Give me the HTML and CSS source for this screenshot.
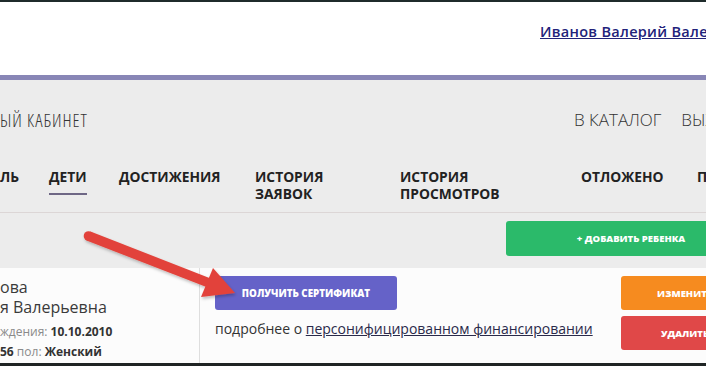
FILE: index.html
```html
<!DOCTYPE html>
<html lang="ru">
<head>
<meta charset="utf-8">
<title>Личный кабинет</title>
<link rel="stylesheet" href="styles.css">
</head>
<body>
<div class="page">
  <div class="topline"></div>
  <header class="header">
    <a class="user" href="#">Иванов Валерий Валер</a>
  </header>
  <div class="accent"></div>
  <section class="grey">
    <div class="titlebar">
      <h1 class="title">ЫЙ КАБИНЕТ</h1>
      <nav class="topnav">
        <a href="#">В КАТАЛОГ</a>
        <a href="#">ВЫХ</a>
      </nav>
    </div>
    <nav class="tabs">
      <a class="tab" href="#">ЛЬ</a>
      <a class="tab active" href="#">ДЕТИ</a>
      <a class="tab" href="#">ДОСТИЖЕНИЯ</a>
      <a class="tab" href="#">ИСТОРИЯ<br>ЗАЯВОК</a>
      <a class="tab" href="#">ИСТОРИЯ<br>ПРОСМОТРОВ</a>
      <a class="tab" href="#">ОТЛОЖЕНО</a>
      <a class="tab" href="#">П</a>
    </nav>
    <div class="actions">
      <button class="btn btn-green">+ ДОБАВИТЬ РЕБЕНКА</button>
    </div>
  </section>
  <section class="card">
    <div class="info">
      <div class="name">ова<br>я Валерьевна</div>
      <div class="detail"><span class="label">ждения:</span> <b>10.10.2010</b></div>
      <div class="detail"><b>56</b> <span class="label">пол:</span> <b>Женский</b></div>
    </div>
    <div class="main">
      <button class="btn btn-purple">ПОЛУЧИТЬ СЕРТИФИКАТ</button>
      <p class="more">подробнее о <a href="#">персонифицированном финансировании</a></p>
    </div>
    <div class="side">
      <button class="btn btn-orange">ИЗМЕНИТЬ</button>
      <button class="btn btn-red">УДАЛИТЬ</button>
    </div>
  </section>
  <svg class="arrow" width="706" height="366" viewBox="0 0 706 366" aria-hidden="true">
    <defs>
      <filter id="sh" x="-10%" y="-10%" width="120%" height="130%">
        <feDropShadow dx="1" dy="2" stdDeviation="1.5" flood-color="#000" flood-opacity="0.25"/>
      </filter>
    </defs>
    <g filter="url(#sh)" fill="#e2433b">
      <path d="M86.5 240.5 L209 288 L212 279 L90.5 231.5 Z"/>
      <circle cx="88.5" cy="236" r="4.8"/>
      <polygon points="213,268 201,297 235,293"/>
    </g>
  </svg>
</div>
</body>
</html>
```
FILE: styles.css
```css
* { box-sizing: border-box; }
html, body { margin: 0; padding: 0; }
body {
  width: 706px;
  height: 366px;
  overflow: hidden;
  font-family: "Open Sans", "Noto Sans", sans-serif;
  color: #333;
  background: #fff;
}
.page { position: relative; width: 706px; height: 366px; overflow: hidden; }
.topline { height: 2px; background: #1f2b2b; }
.header {
  height: 73px;
  background: #fff;
  display: flex;
  align-items: center;
  padding-left: 540px;
  padding-bottom: 14px;
  white-space: nowrap;
  overflow: hidden;
}
.user {
  color: #22227a;
  font-size: 14.5px;
  font-weight: 600;
  letter-spacing: 0.3px;
  text-decoration: underline;
  white-space: nowrap;
}
.accent { height: 5px; background: #8886b6; }
.grey { background: #ececec; height: 188px; }
.titlebar {
  display: grid;
  grid-template-columns: 574px auto;
  padding-top: 28px;
  height: 88px;
  white-space: nowrap;
}
.title {
  margin: 0;
  font-size: 18px;
  line-height: 24px;
  font-weight: 300;
  font-stretch: 87.5%;
  letter-spacing: 1px;
  color: #333;
}
.topnav {
  display: flex;
  gap: 20px;
  font-size: 17px;
  line-height: 24px;
  font-weight: 300;
}
.topnav a { color: #333; text-decoration: none; }
.tabs {
  display: grid;
  grid-template-columns: 49px 70px 136px 145px 181px 116px auto;
  height: 45px;
  padding-bottom: 10px;
  border-bottom: 1px solid #dcd6d6;
  white-space: nowrap;
}
.tab {
  position: relative;
  color: #222;
  text-decoration: none;
  font-size: 13.8px;
  font-weight: 700;
  line-height: 17px;
}
.tab.active::after {
  content: "";
  position: absolute;
  left: 0;
  width: 38px;
  top: 25px;
  height: 2px;
  background: #6e6785;
}
.actions { display: flex; padding-top: 8px; padding-left: 506px; white-space: nowrap; }
.btn {
  border: 0;
  border-radius: 3px;
  color: #fff;
  font-family: "Open Sans", "Noto Sans", sans-serif;
  font-weight: 800;
  font-size: 9.5px;
  height: 34px;
  padding: 0;
  flex-shrink: 0;
}
.btn-green { background: #2bba6a; width: 250px; height: 35px; }
.btn-purple { background: #6562c8; width: 182px; font-size: 9.8px; }
.btn-orange { background: #f68b1f; width: 128px; }
.btn-red { background: #e04848; width: 128px; }
.card {
  display: flex;
  height: 98px;
  background: #fcfcfc;
  border-bottom: 3px solid #1f2424;
  white-space: nowrap;
}
.info {
  flex: 0 0 200px;
  border-right: 1px solid #dedede;
  padding-top: 9px;
}
.name { font-size: 16px; line-height: 20px; color: #3a3a3a; margin-bottom: 5px; }
.detail { font-size: 12px; line-height: 20px; color: #333; }
.detail b { font-weight: 700; }
.label { color: #8a8a8a; }
.main { flex: 0 0 421px; padding-left: 15px; padding-top: 8px; }
.more { margin: 10px 0 0; font-size: 14px; line-height: 18px; color: #333; }
.more a { color: #2a2a4a; text-decoration: underline; }
.side { flex: 0 0 128px; display: flex; flex-direction: column; gap: 6px; padding-top: 8px; }
.arrow { position: absolute; left: 0; top: 0; pointer-events: none; }
```
